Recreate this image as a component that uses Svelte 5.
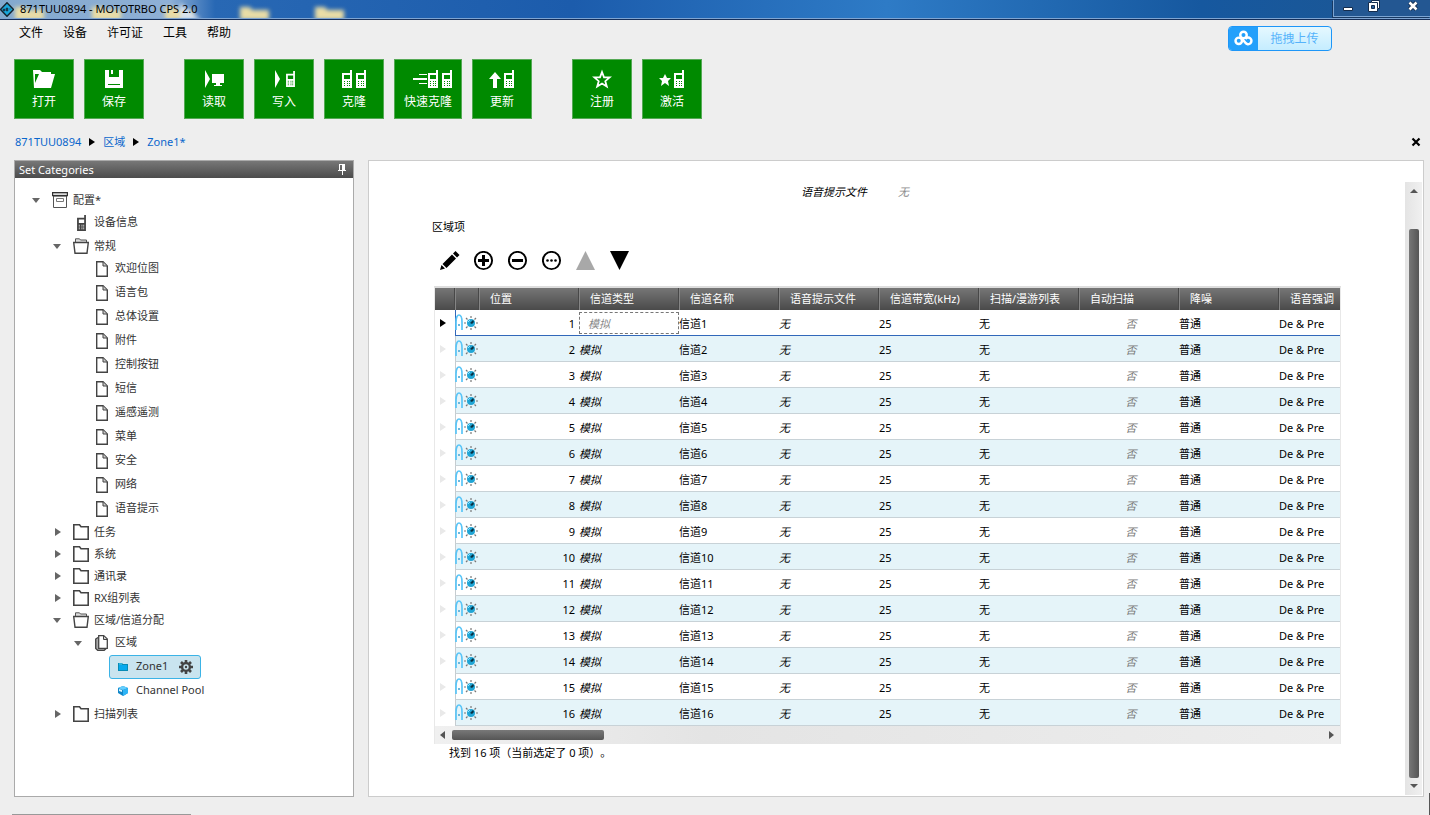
<script lang="ts">
	type Action = { icon: string; label: string; wide?: boolean };
	type TreeNode = { level: number; icon: string; label: string; open?: boolean; selected?: boolean };

	const menus = ["文件", "设备", "许可证", "工具", "帮助"];

	const actionGroups: Action[][] = [
		[
			{ icon: "open", label: "打开" },
			{ icon: "save", label: "保存" },
		],
		[
			{ icon: "read", label: "读取" },
			{ icon: "write", label: "写入" },
			{ icon: "clone", label: "克隆" },
			{ icon: "fast-clone", label: "快速克隆", wide: true },
			{ icon: "update", label: "更新" },
		],
		[
			{ icon: "register", label: "注册" },
			{ icon: "activate", label: "激活" },
		],
	];

	const pages = ["欢迎位图", "语言包", "总体设置", "附件", "控制按钮", "短信", "遥感遥测", "菜单", "安全", "网络", "语音提示"];

	const tree: TreeNode[] = [
		{ level: 0, icon: "archive", label: "配置*", open: true },
		{ level: 1, icon: "device", label: "设备信息" },
		{ level: 1, icon: "folder-open", label: "常规", open: true },
		...pages.map((label) => ({ level: 2, icon: "page", label })),
		{ level: 1, icon: "folder", label: "任务", open: false },
		{ level: 1, icon: "folder", label: "系统", open: false },
		{ level: 1, icon: "folder", label: "通讯录", open: false },
		{ level: 1, icon: "folder", label: "RX组列表", open: false },
		{ level: 1, icon: "folder-open", label: "区域/信道分配", open: true },
		{ level: 2, icon: "pages", label: "区域", open: true },
		{ level: 3, icon: "zone", label: "Zone1", selected: true },
		{ level: 3, icon: "pool", label: "Channel Pool" },
		{ level: 1, icon: "folder", label: "扫描列表", open: false },
	];

	const columns = ["位置", "信道类型", "信道名称", "语音提示文件", "信道带宽(kHz)", "扫描/漫游列表", "自动扫描", "降噪", "语音强调"];
	const rows = Array.from({ length: 16 }, (_, i) => i + 1);
	const tools = [
		{ icon: "edit", label: "编辑" },
		{ icon: "add", label: "添加" },
		{ icon: "remove", label: "删除" },
		{ icon: "more", label: "更多" },
		{ icon: "up", label: "上移" },
		{ icon: "down", label: "下移" },
	];

	let current = 1;
</script>

<svg class="sprite" aria-hidden="true">
	<symbol id="radio" viewBox="0 0 10 18">
		<path fill="currentColor" fill-rule="evenodd" d="M8 0h2v18H0V3h8zM2 5v4h6V5zM2 11v1h1v-1zM5 11v1h1v-1zM7 11v1h1v-1zM2 13v1h1v-1zM5 13v1h1v-1zM7 13v1h1v-1zM2 15v1h1v-1zM5 15v1h1v-1zM7 15v1h1v-1z" />
	</symbol>
	<symbol id="page" viewBox="0 0 16 16">
		<path d="M2.7.7H9L13.3 5v10.3H2.7z" fill="#fff" stroke="#444" stroke-width="1.4" />
		<path d="M9 1v4h4" fill="#ccc" stroke="#444" />
	</symbol>
	<symbol id="folder" viewBox="0 0 16 16">
		<path d="M.8.8h5.7l1.5 2h7.2v12.4H.8z" fill="#fff" stroke="#444" stroke-width="1.6" />
	</symbol>
	<symbol id="folder-open" viewBox="0 0 16 16">
		<path d="M2.5 4V.8h4l1 1.2h6v2" fill="#ddd" stroke="#555" />
		<path d="M.7 4.5h14.6L14 15.2H2z" fill="#fff" stroke="#444" stroke-width="1.4" />
	</symbol>
	<symbol id="archive" viewBox="0 0 16 16">
		<path d="M1.5 4h13v11.5h-13z" fill="#fff" stroke="#555" />
		<path d="M.6.6h14.8v3H.6z" fill="#ddd" stroke="#333" stroke-width="1.2" />
		<path d="M4.5 6.5h7v3h-7z" fill="#fff" stroke="#777" />
	</symbol>
	<symbol id="pages" viewBox="0 0 16 16">
		<path d="M4 2.5 1.7 4v9.5l2 1.8h6.5l2-1.8" fill="#aaa" stroke="#444" stroke-width="1.3" />
		<path d="M4.7.7h5L13.3 4v9.3H4.7z" fill="#fff" stroke="#444" stroke-width="1.3" />
		<path d="M9.5 1v3.5H13" fill="#ccc" stroke="#444" />
	</symbol>
	<symbol id="zone" viewBox="0 0 16 16">
		<path d="M3 4h4l1 1h5v7H3z" fill="#078bb5" />
		<path d="M4 6h8v5H4z" fill="#06a9ee" />
		<path d="M4 5h3" stroke="#5ed7ff" />
	</symbol>
	<symbol id="pool" viewBox="0 0 16 16">
		<path d="m8 3 5 2v5l-5 3-5-3V5z" fill="#1187c9" />
		<path d="m8 3 5 2-5 2-5-2z" fill="#64cfff" />
		<path d="M8 7v6l5-3V5z" fill="#2db4f6" />
		<path d="m4 6 3 1v2L4 8z" fill="#d9f5ff" />
	</symbol>
	<symbol id="channel" viewBox="0 0 24 20">
		<path d="M1 17V9c0-5 1.5-7 3-7s3 2 3 7v8" fill="none" stroke="#5ac5f7" stroke-width="1.7" />
		<path d="M3 11h2v2H3z" fill="#6cb8dd" />
		<path d="M16 3v2M16 15v2M9 10h2M21 10h2M11 5l1.5 1.5M21 5l-1.5 1.5M11 15l1.5-1.5M21 15l-1.5-1.5" stroke="#777" stroke-width="1.2" />
		<circle cx="16" cy="10" r="4" fill="#20a5d5" />
		<path d="m15 10 3-3 1 2-2 2z" fill="#0a3041" />
		<path d="m13 9 2-2" stroke="#8ce0ff" />
	</symbol>
</svg>

<div class="window">
	<header class="titlebar">
		<svg class="glass" aria-hidden="true">
			{#each [15, 92, 165, 240, 315] as x}
				<path transform="translate({x} 0)" d="M0 7h10l2 3h17v14H0z" fill="#e9dda6" />
			{/each}
			<path d="M180 3l22 18h-22z" fill="#d9e3ee" />
		</svg>
		<svg class="logo" viewBox="0 0 14 15" aria-hidden="true">
			<path d="m7 .7 6.5 6.8L7 14.3.5 7.5z" fill="#18a7dc" stroke="#15232e" stroke-width="1.4" />
			<path d="M3 7h2v2H3zM6 6h2v3H6zM9 7h2" fill="#153b50" stroke="#153b50" stroke-width=".5" />
		</svg>
		<h1>871TUU0894 - MOTOTRBO CPS 2.0</h1>
		<div class="window-controls">
			<button aria-label="最小化"><svg viewBox="0 0 12 12"><path d="M1.5 7.5h9v3h-9z" fill="#fff" stroke="#142c4d" /></svg></button>
			<button aria-label="还原"><svg viewBox="0 0 12 12"><path d="M3.5.5h8v8h-2v3h-9v-9h3z" fill="#fff" stroke="#142c4d" /><path d="M3.5 5.5h3v3h-3z" fill="#285e9d" stroke="#142c4d" /><path d="M4 2.5h5.5V8" fill="none" stroke="#142c4d" /></svg></button>
			<button class="quit" aria-label="关闭"><svg viewBox="0 0 12 12"><path d="m2.5 2.5 7 7m0-7-7 7" stroke="#142c4d" stroke-width="4.4" /><path d="m2.5 2.5 7 7m0-7-7 7" stroke="#fff" stroke-width="2.6" /></svg></button>
		</div>
	</header>

	<div class="menubar">
		<nav>
			{#each menus as menu}
				<button>{menu}</button>
			{/each}
		</nav>
		<button class="upload">
			<span class="upload-icon">
				<svg viewBox="0 0 20 16" fill="none" stroke="#fff" stroke-width="2.6" aria-hidden="true">
					<circle cx="10" cy="4.8" r="3.4" /><circle cx="5" cy="11" r="3.4" /><path d="M12 9a3.5 3.5 0 1 1 0 4L8.5 8.7" />
				</svg>
			</span>
			<span class="upload-text">拖拽上传</span>
		</button>
	</div>

	<div class="toolbar">
		{#each actionGroups as group}
			<div class="action-group">
				{#each group as action}
					<button class="action" class:wide={action.wide}>
						<svg viewBox="0 0 40 20" fill="#fff" color="#fff" aria-hidden="true">
							{#if action.icon === "open"}
								<path fill-rule="evenodd" d="M9 1h7l2 2h9v2h4l-4 14H10zM11 5v9l4-9z" />
							{:else if action.icon === "save"}
								<path fill-rule="evenodd" d="M11 1h4v7h10V1h4v18H11zM14 15v1h12v-1zM17 1h2v4h-2z" />
							{:else if action.icon === "read"}
								<path d="m11 1 5 9-5 9zM18 5h12v9h-4v2h2v1h-8v-1h2v-2h-4z" />
							{:else if action.icon === "write"}
								<path d="m11 1 5 9-5 9z" />
								<use href="#radio" x="22" y="2" width="9" height="16" />
							{:else if action.icon === "clone"}
								<use href="#radio" x="8" y="1" width="10" height="18" />
								<use href="#radio" x="22" y="1" width="10" height="18" />
							{:else if action.icon === "fast-clone"}
								<path d="M6 5h8v1H6zM0 9h14v2H0zM6 14h8v1H6z" />
								<use href="#radio" x="15" y="1" width="10" height="18" />
								<use href="#radio" x="29" y="1" width="10" height="18" />
							{:else if action.icon === "update"}
								<path d="m13 3 6 7h-4v9h-4v-9H7z" />
								<use href="#radio" x="22" y="1" width="10" height="18" />
							{:else if action.icon === "register"}
								<path fill="none" stroke="#fff" stroke-width="1.8" d="m20 3 2 5.4h5.6l-4.3 3.8 1.5 5.3-4.8-3-4.8 3 1.5-5.3-4.3-3.8H18z" />
							{:else}
								<path d="m13 5 2 4h4l-3 3 1 5-4-3-4 3 1-5-3-3h4z" />
								<use href="#radio" x="22" y="1" width="10" height="18" />
							{/if}
						</svg>
						<span>{action.label}</span>
					</button>
				{/each}
			</div>
		{/each}
	</div>

	<nav class="breadcrumb">
		<a href="#root">871TUU0894</a>
		<svg viewBox="0 0 6 8" aria-hidden="true"><path d="m0 0 6 4-6 4z" /></svg>
		<a href="#zones">区域</a>
		<svg viewBox="0 0 6 8" aria-hidden="true"><path d="m0 0 6 4-6 4z" /></svg>
		<a href="#zone1">Zone1*</a>
		<button class="close" aria-label="关闭页面">
			<svg viewBox="0 0 10 10"><path d="m1.5 1.5 7 7m0-7-7 7" stroke="#000" stroke-width="2.2" /></svg>
		</button>
	</nav>

	<div class="workspace">
		<aside class="sidebar">
			<div class="sidebar-header">
				<h2>Set Categories</h2>
				<button aria-label="固定"><svg viewBox="0 0 8 11"><path d="M1 0h6v6h1v1H5v4H4V7H0V6h1zm1 1v5h2V1z" fill="#fff" fill-rule="evenodd" /></svg></button>
			</div>
			<ul class="tree">
				{#each tree as node}
					<li class="level-{node.level}" class:compact={node.level === 0 || node.icon.startsWith("folder")}>
						{#if node.open !== undefined}
							<button class="toggle" aria-label={node.label} aria-expanded={node.open}>
								<svg viewBox="0 0 8 8" fill="#666"><path d={node.open ? "M0 2h8L4 7z" : "m2 0 6 4-6 4z"} /></svg>
							</button>
						{:else}
							<span class="toggle"></span>
						{/if}
						<button class="node" class:selected={node.selected}>
							<svg class="node-icon" viewBox="0 0 16 16" color="#444" aria-hidden="true">
								{#if node.icon === "device"}
									<use href="#radio" x="4" y="0" width="9" height="16" />
								{:else}
									<use href="#{node.icon}" width="16" height="16" />
								{/if}
							</svg>
							<span>{node.label}</span>
							{#if node.selected}
								<svg class="gear" viewBox="0 0 14 14" aria-hidden="true">
									<path d="M7 0v14M0 7h14M2 2l10 10M12 2 2 12" stroke="#444" stroke-width="2.6" />
									<circle cx="7" cy="7" r="3.9" fill="#c9e4ef" stroke="#444" stroke-width="2.4" />
									<circle cx="7" cy="7" r="1.2" fill="#444" />
								</svg>
							{/if}
						</button>
					</li>
				{/each}
			</ul>
		</aside>

		<main>
			<div class="content">
				<dl class="field">
					<dt>语音提示文件</dt>
					<dd>无</dd>
				</dl>

				<section>
					<h3>区域项</h3>
					<div class="grid-tools">
						{#each tools as tool}
							<button aria-label={tool.label} disabled={tool.icon === "up"}>
								<svg viewBox="0 0 20 20">
									{#if tool.icon === "edit"}
										<path d="m0 19 1.5-5L5 17.5zM2.5 13 12 3.5 16 7.5 6.5 17zM13 2.5 15.5 0 19.5 4 17 6.5z" />
									{:else if tool.icon === "up"}
										<path d="m9.5 0 9.5 19H0z" fill="#a8a8a8" />
									{:else if tool.icon === "down"}
										<path d="M0 0h19L9.5 19z" />
									{:else}
										<circle cx="9.5" cy="9.5" r="8.6" fill="none" stroke="#000" stroke-width="1.9" />
										{#if tool.icon === "add"}
											<path d="M8 4h3v4h4v3h-4v4H8v-4H4V8h4z" />
										{:else if tool.icon === "remove"}
											<path d="M4 8h11v3H4z" />
										{:else}
											<circle cx="5.5" cy="9.5" r="1.3" /><circle cx="9.5" cy="9.5" r="1.3" /><circle cx="13.5" cy="9.5" r="1.3" />
										{/if}
									{/if}
								</svg>
							</button>
						{/each}
					</div>

					<div class="grid">
						<table>
							<colgroup>
								<col class="col-marker" />
								<col class="col-icon" />
								{#each columns as column, i}
									<col class:col-data={i < columns.length - 1} />
								{/each}
							</colgroup>
							<thead>
								<tr>
									<th aria-label="当前行"></th>
									<th aria-label="状态"></th>
									{#each columns as column}
										<th>{column}</th>
									{/each}
								</tr>
							</thead>
							<tbody>
								{#each rows as row}
									<tr class:current={row === current} on:click={() => (current = row)}>
										<td class="marker"><svg viewBox="0 0 6 8" aria-hidden="true"><path d="m0 0 6 4-6 4z" fill="currentColor" /></svg></td>
										<td class="status"><svg viewBox="0 0 24 20" aria-hidden="true"><use href="#channel" width="24" height="20" /></svg></td>
										<td class="position">{row}</td>
										<td class="type"><span>模拟</span></td>
										<td>信道{row}</td>
										<td class="italic">无</td>
										<td>25</td>
										<td>无</td>
										<td class="scan">否</td>
										<td>普通</td>
										<td>De &amp; Pre</td>
									</tr>
								{/each}
							</tbody>
						</table>
						<div class="hscroll">
							<button aria-label="向左滚动"><svg viewBox="0 0 6 8"><path d="M5 0v8L0 4z" fill="#555" /></svg></button>
							<div class="htrack"><div class="hthumb"></div></div>
							<button aria-label="向右滚动"><svg viewBox="0 0 6 8"><path d="M0 0v8l5-4z" fill="#555" /></svg></button>
						</div>
					</div>
					<p class="summary">找到 16 项（当前选定了 0 项）。</p>
				</section>
			</div>
			<div class="vscroll">
				<button aria-label="向上滚动"><svg viewBox="0 0 8 6"><path d="M0 5h8L4 1z" fill="#555" /></svg></button>
				<div class="vtrack"><div class="vthumb"></div></div>
				<button aria-label="向下滚动"><svg viewBox="0 0 8 6"><path d="M0 1h8L4 5z" fill="#555" /></svg></button>
			</div>
		</main>
	</div>
	<div class="status-edge"></div>
	<div class="side-edge"></div>
</div>

<style>
	:global(body) {
		background: #eee;
	}

	.window {
		position: relative;
		display: flex;
		flex-direction: column;
		box-sizing: border-box;
		min-height: 100vh;
		color: #000;
		font: 11px/20px "Noto Sans", "Noto Sans CJK SC", sans-serif;
	}

	.sprite {
		position: absolute;
		width: 0;
		height: 0;
	}

	button {
		appearance: none;
		margin: 0;
		padding: 0;
		border: 0;
		background: none;
		color: inherit;
		font: inherit;
	}

	svg {
		display: block;
		flex: none;
	}

	h1,
	h2,
	h3,
	p,
	dl,
	dd,
	ul {
		margin: 0;
		padding: 0;
		font-size: 11px;
		font-weight: 400;
	}

	.titlebar {
		position: relative;
		display: flex;
		box-sizing: border-box;
		height: 20px;
		border-bottom: 1px solid #162f59;
		overflow: hidden;
		background: linear-gradient(90deg, #83a9ce, #8fb0d6 170px, #2868b4 215px, #1c5cac 40%, #2e7bc6 62%, #16589f 84%, #1d5793);
	}

	/* desktop icons showing through the translucent title bar */
	.glass {
		position: absolute;
		inset: 0;
		width: 100%;
		height: 20px;
		filter: blur(2px);
	}

	.titlebar::after {
		position: absolute;
		right: 0;
		bottom: 0;
		left: 0;
		height: 1px;
		background: #7fa5d2;
		content: "";
	}

	.logo {
		position: relative;
		width: 14px;
		height: 15px;
		margin-top: 2px;
	}

	h1 {
		position: relative;
		margin-left: 6px;
		line-height: 18px;
		white-space: nowrap;
	}

	.window-controls {
		position: relative;
		display: flex;
		gap: 14px;
		box-sizing: border-box;
		width: 97px;
		height: 17px;
		margin-left: auto;
		padding: 0 11px 4px 8px;
		border: solid #7ca4d2;
		border-width: 0 0 1px 1px;
		box-shadow: -1px 1px #173963;
		background: #235792;
	}

	.window-controls svg {
		width: 12px;
		height: 12px;
	}

	.quit {
		margin-left: auto;
	}

	.menubar {
		display: flex;
		align-items: flex-start;
		height: 39px;
		font-size: 12px;
	}

	.menubar nav {
		display: flex;
		gap: 20px;
		padding-left: 19px;
		line-height: 26px;
	}

	.upload {
		display: flex;
		box-sizing: border-box;
		width: 104px;
		height: 25px;
		margin: 6px 98px 0 auto;
		border: 1px solid #1d96f8;
		border-radius: 4px;
		overflow: hidden;
		background: linear-gradient(#e5f8ff, #c5edff);
		color: #55b3fb;
		line-height: 24px;
	}

	.upload-icon {
		padding: 3px 5px 4px;
		background: #23a0fb;
	}

	.upload-icon svg {
		width: 19px;
		height: 16px;
	}

	.upload-text {
		flex: 1;
	}

	.toolbar {
		display: flex;
		gap: 40px;
		padding-left: 14px;
	}

	.action-group {
		display: flex;
		gap: 10px;
	}

	.action {
		display: flex;
		flex-direction: column;
		align-items: center;
		box-sizing: border-box;
		width: 60px;
		height: 60px;
		padding-top: 9px;
		border: 1px solid #55a955;
		background: #008a00;
		color: #fff;
		font-size: 12px;
		line-height: 26px;
	}

	.action.wide {
		width: 68px;
	}

	.action svg {
		width: 40px;
		height: 20px;
	}

	.action.wide svg {
		margin-left: 10px;
	}

	.breadcrumb {
		display: flex;
		align-items: center;
		gap: 8px;
		height: 20px;
		padding: 13px 9px 8px 15px;
	}

	.breadcrumb a {
		color: #0a66cc;
		text-decoration: none;
	}

	.breadcrumb svg {
		width: 6px;
		height: 8px;
	}

	.close {
		margin-left: auto;
	}

	.breadcrumb .close svg {
		width: 10px;
		height: 10px;
	}

	.workspace {
		display: flex;
		flex: 1;
		gap: 14px;
		padding: 0 6px 18px 14px;
	}

	.sidebar {
		box-sizing: border-box;
		flex: none;
		width: 340px;
		border: 1px solid #aaa;
		background: #fff;
	}

	.sidebar-header {
		display: flex;
		align-items: center;
		justify-content: space-between;
		height: 17px;
		padding: 0 7px 0 4px;
		background: linear-gradient(#777, #4c4c4c);
		color: #fff;
		line-height: 17px;
	}

	.sidebar-header svg {
		width: 8px;
		height: 11px;
	}

	.tree {
		padding-top: 11px;
		color: #333;
		list-style: none;
	}

	.tree li {
		display: flex;
		height: 24px;
	}

	.tree li.compact {
		height: 22px;
	}

	.level-0 {
		padding-left: 15px;
	}

	.level-1 {
		padding-left: 36px;
	}

	.level-2 {
		padding-left: 57px;
	}

	.level-3 {
		padding-left: 78px;
	}

	.toggle {
		display: flex;
		align-items: center;
		justify-content: center;
		width: 12px;
		margin-right: 4px;
	}

	.toggle svg {
		width: 8px;
		height: 8px;
	}

	.node {
		display: flex;
		align-items: center;
		gap: 5px;
		box-sizing: border-box;
		padding: 0 7px 0 5px;
		border: 1px solid transparent;
		border-radius: 3px;
	}

	.node span {
		align-self: flex-start;
		white-space: nowrap;
	}

	.node.selected {
		border-color: #3bb3e6;
		background: #c9e4ef;
	}

	.node-icon {
		width: 16px;
		height: 16px;
	}

	.gear {
		width: 14px;
		height: 14px;
		margin-left: 6px;
	}

	main {
		display: flex;
		flex: 1;
		min-width: 0;
		border: 1px solid #ccc;
		background: #fff;
	}

	.content {
		flex: 1;
		min-width: 0;
		padding-top: 21px;
	}

	.field {
		display: grid;
		grid-template-columns: 1fr 1fr;
		font-style: italic;
	}

	.field dt {
		padding-right: 20px;
		text-align: right;
	}

	.field dd {
		padding-left: 11px;
		color: #888;
	}

	section {
		margin: 15px 64px 0 65px;
	}

	h3 {
		margin-left: -2px;
	}

	.grid-tools {
		display: flex;
		gap: 14px;
		padding: 14px 0 15px 6px;
	}

	.grid-tools svg {
		width: 20px;
		height: 20px;
	}

	.grid {
		border: 1px solid #e8e8e8;
		border-top: 2px solid #ddd;
		border-bottom: 0;
	}

	table {
		width: 100%;
		table-layout: fixed;
		border-spacing: 0;
	}

	.col-marker {
		width: 20px;
	}

	.col-icon {
		width: 24px;
	}

	.col-data {
		width: 100px;
	}

	thead {
		background: linear-gradient(#767676, #4a4a4a);
	}

	th {
		box-sizing: border-box;
		height: 22px;
		padding: 0 0 0 10px;
		border-left: 1px solid #858585;
		box-shadow: -1px 0 #484848;
		color: #fff;
		font-weight: 400;
		text-align: left;
		white-space: nowrap;
	}

	th:first-child {
		border-left: 0;
		box-shadow: none;
	}

	td {
		box-sizing: border-box;
		height: 26px;
		padding: 2px 0 0;
		border-bottom: 1px solid #c8d2d7;
		line-height: 22px;
		white-space: nowrap;
	}

	tbody tr:nth-child(even) td {
		background: #e5f4f9;
	}

	tbody tr td.marker {
		padding: 0 0 0 5px;
		border-bottom-color: #fff;
		background: #fff;
		color: #e9e9e9;
	}

	.marker svg {
		width: 6px;
		height: 8px;
	}

	td.status {
		padding: 0;
		border-left: 1px solid #c5ccd0;
	}

	.status svg {
		width: 24px;
		height: 20px;
		margin-left: -1px;
	}

	.position {
		padding-right: 4px;
		text-align: right;
	}

	.type,
	.italic,
	.scan {
		font-style: italic;
	}

	.scan {
		padding-left: 4px;
		color: #777;
		text-align: center;
	}

	.current td {
		border-bottom-color: #3168ba;
	}

	.current td.status {
		border-left-color: #3168ba;
	}

	tbody tr.current td.marker {
		color: #000;
	}

	.current .type {
		padding: 0;
		color: #888;
	}

	.current .type span {
		display: block;
		box-sizing: border-box;
		height: 22px;
		padding-left: 8px;
		border: 1px dashed #777;
	}

	.hscroll {
		display: flex;
		align-items: center;
		height: 18px;
		padding: 0 5px;
		background: linear-gradient(90deg, #f0f0f0, #e4e4e4 30%, #ededed);
	}

	.hscroll svg {
		width: 6px;
		height: 8px;
	}

	.htrack {
		flex: 1;
		margin: 0 6px;
	}

	.hthumb {
		width: 17.5%;
		height: 10px;
		border-radius: 2px;
		background: linear-gradient(#787878, #555);
	}

	.summary {
		padding-left: 15px;
		line-height: 18px;
		text-spacing-trim: space-all;
	}

	.vscroll {
		display: flex;
		flex-direction: column;
		align-items: center;
		width: 17px;
		margin: 21px 1px 1px 0;
		padding: 6px 0;
		box-sizing: border-box;
		background: linear-gradient(90deg, #e4e4e4, #f0f0f0);
	}

	.vscroll svg {
		width: 8px;
		height: 6px;
	}

	.vtrack {
		display: flex;
		flex: 1;
		flex-direction: column;
		justify-content: flex-end;
		padding-bottom: 5px;
	}

	.vthumb {
		width: 10px;
		height: 94%;
		border-radius: 2px;
		background: linear-gradient(90deg, #777, #555);
	}

	.status-edge {
		position: absolute;
		bottom: 0;
		left: 12px;
		width: 179px;
		height: 1px;
		background: #999;
	}

	.side-edge {
		position: absolute;
		right: 0;
		bottom: 0;
		width: 1px;
		height: 22px;
		background: #555;
	}
</style>
